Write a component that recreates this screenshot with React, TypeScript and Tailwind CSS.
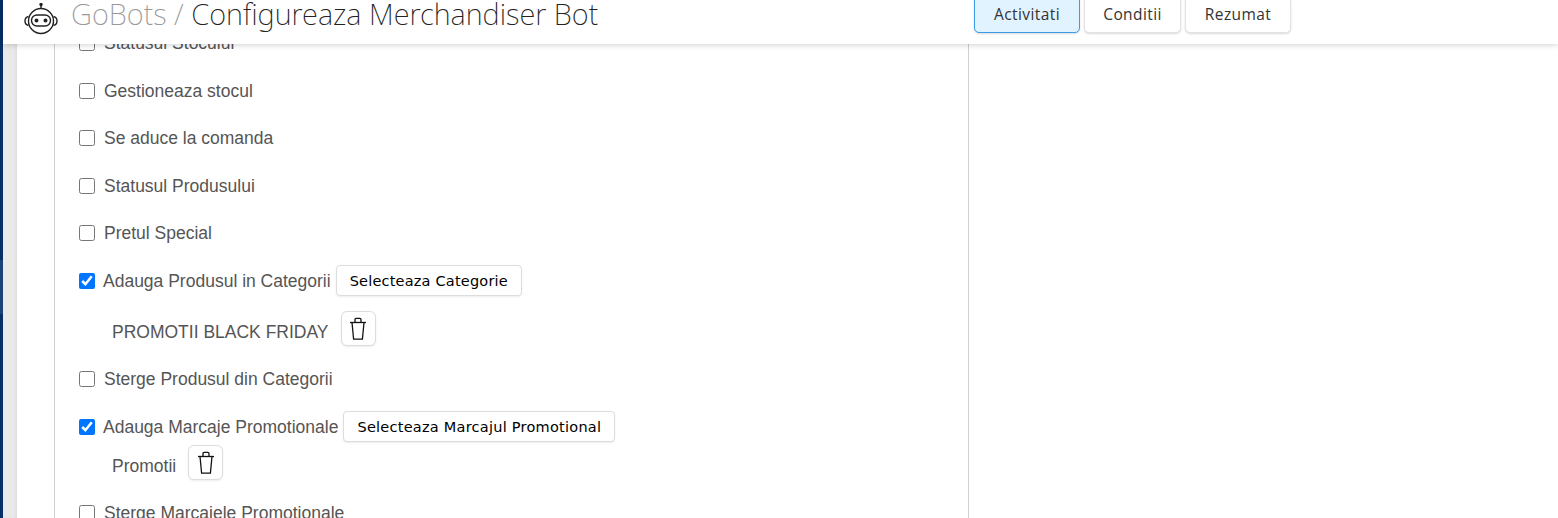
import React from 'react';

const sans = "font-['Liberation_Sans',Arial,sans-serif]";

const Row: React.FC<{ label: string; checked?: boolean; children?: React.ReactNode; className?: string }> = ({ label, checked, children, className }) => (
  <div className={`flex items-center ${className ?? ''}`}>
    <input type="checkbox" defaultChecked={checked} className={`w-4 h-4 ml-[24px] accent-[#0075ff] shrink-0 ${checked ? 'mr-[8px]' : 'mr-[9px]'}`} />
    <span className="text-[17.5px] leading-6 text-[#555]">{label}</span>
    {children}
  </div>
);

const PlainButton: React.FC<{ children: React.ReactNode; className?: string }> = ({ children, className }) => (
  <button className={`h-[31px] px-[13px] pt-[2px] bg-white border border-[#ddd] rounded-[4px] shadow-[0_1px_2px_rgba(0,0,0,0.08)] text-[14.5px] tracking-[0.2px] text-black font-['DejaVu_Sans',sans-serif] whitespace-nowrap ${className ?? ''}`}>
    {children}
  </button>
);

const TrashButton: React.FC = () => (
  <button className="w-[35px] h-[35px] flex items-center justify-center bg-white border border-[#ddd] rounded-[6px] shadow-[0_1px_2px_rgba(0,0,0,0.08)]">
    <svg width="18" height="24" viewBox="0 0 18 24" fill="none" stroke="#111" strokeWidth="1.3">
      <path d="M1 5.500h16" />
      <path d="M6 5.500V2.600c0-.8.5-1.300 1.200-1.300h3.600c.7 0 1.200.5 1.200 1.300v2.900" />
      <path d="M3 5.500l1.600 16.700h8.800L15 5.500" />
    </svg>
  </button>
);

const TabButton: React.FC<{ label: string; active?: boolean; width: string }> = ({ label, active, width }) => (
  <button
    className={`${width} h-[34px] -mt-[1px] pb-[3px] rounded-b-[5px] border text-[15.5px] tracking-[0.4px] text-[#333] font-['Open_Sans',sans-serif] shadow-[0_1px_2px_rgba(0,0,0,0.15)] ${
      active ? 'bg-[#e1f3ff] border-[#3b9be6]' : 'bg-white border-[#e3e3e3]'
    }`}
  >
    {label}
  </button>
);

export default function App() {
  return (
    <div className={`h-[518px] w-[1558px] overflow-hidden flex bg-white ${sans}`}>
      {/* Left edge */}
      <div className="w-[3px] h-full flex flex-col shrink-0">
        <div className="h-[260px] bg-[#062f66]" />
        <div className="h-[54px] bg-[#1a4378]" />
        <div className="flex-1 bg-[#062f66]" />
      </div>

      <div className="flex-1 flex flex-col min-w-0">
        {/* Header */}
        <header className="relative z-10 h-[44px] shrink-0 bg-white shadow-[0_1px_6px_rgba(0,0,0,0.18)] flex">
          <div className="w-[971px] flex items-center pl-[21px] -mt-[17px] shrink-0">
            <svg width="34" height="32" viewBox="0 0 34 32" fill="none" stroke="#222" strokeWidth="1.4" className="shrink-0 mt-[10px]">
              <path d="M17 0v5" />
              <circle cx="17" cy="1.500" r="1" fill="#222" />
              <circle cx="17" cy="18" r="12.500" />
              <rect x="7.500" y="12" width="19" height="11" rx="5.500" />
              <circle cx="12.500" cy="17.500" r="1.300" fill="#222" />
              <circle cx="21.500" cy="17.500" r="1.300" fill="#222" />
              <path d="M4.500 13.500c-2.500.5-3.500 2.500-3.500 4.500s1 4 3.500 4.500" />
              <path d="M29.500 13.500c2.500.5 3.500 2.500 3.500 4.500s-1 4-3.500 4.500" />
            </svg>
            <h1 className="ml-[13px] text-[29px] leading-8 font-extralight whitespace-nowrap font-['Noto_Sans',sans-serif]">
              <span className="text-[#999]">GoBots / </span>
              <span className="text-[#222]">Configureaza Merchandiser Bot</span>
            </h1>
          </div>
          <div className="flex gap-[4px] items-start">
            <TabButton label="Activitati" active width="w-[106px]" />
            <TabButton label="Conditii" width="w-[97px]" />
            <TabButton label="Rezumat" width="w-[106px]" />
          </div>
        </header>

        {/* Body */}
        <div className="flex-1 flex min-h-0">
          <div className="w-[14px] shrink-0 bg-[#e9e9ea] shadow-[inset_-2px_0_2px_rgba(0,0,0,0.04)]" />
          <div className="w-[37px] shrink-0" />
          <main className="w-[915px] shrink-0 border-x border-[#d0d0d0] overflow-hidden">
            <div className="-mt-[13px] flex flex-col">
              <Row label="Statusul Stocului" className="h-[24px]" />
              <Row label="Gestioneaza stocul" className="h-[24px] mt-[23.5px]" />
              <Row label="Se aduce la comanda" className="h-[24px] mt-[23.5px]" />
              <Row label="Statusul Produsului" className="h-[24px] mt-[23.5px]" />
              <Row label="Pretul Special" className="h-[24px] mt-[23.5px]" />
              <Row label="Adauga Produsul in Categorii" checked className="h-[31px] mt-[20px]">
                <PlainButton className="ml-[5px]">Selecteaza Categorie</PlainButton>
              </Row>
              <div className="flex items-start gap-[12px] pl-[57px] mt-[15px] h-[35px]">
                <span className="text-[17.5px] leading-6 text-[#555] pt-[9px]">PROMOTII BLACK FRIDAY</span>
                <TrashButton />
              </div>
              <Row label="Sterge Produsul din Categorii" className="h-[24px] mt-[21px]" />
              <Row label="Adauga Marcaje Promotionale" checked className="h-[31px] mt-[20px]">
                <PlainButton className="ml-[5px] tracking-[0.25px]">Selecteaza Marcajul Promotional</PlainButton>
              </Row>
              <div className="flex items-start gap-[12px] pl-[57px] mt-[3px] h-[35px]">
                <span className="text-[17.5px] leading-6 text-[#555] pt-[9px]">Promotii</span>
                <TrashButton />
              </div>
              <Row label="Sterge Marcajele Promotionale" className="h-[24px] mt-[21px]" />
            </div>
          </main>
        </div>
      </div>
    </div>
  );
}
